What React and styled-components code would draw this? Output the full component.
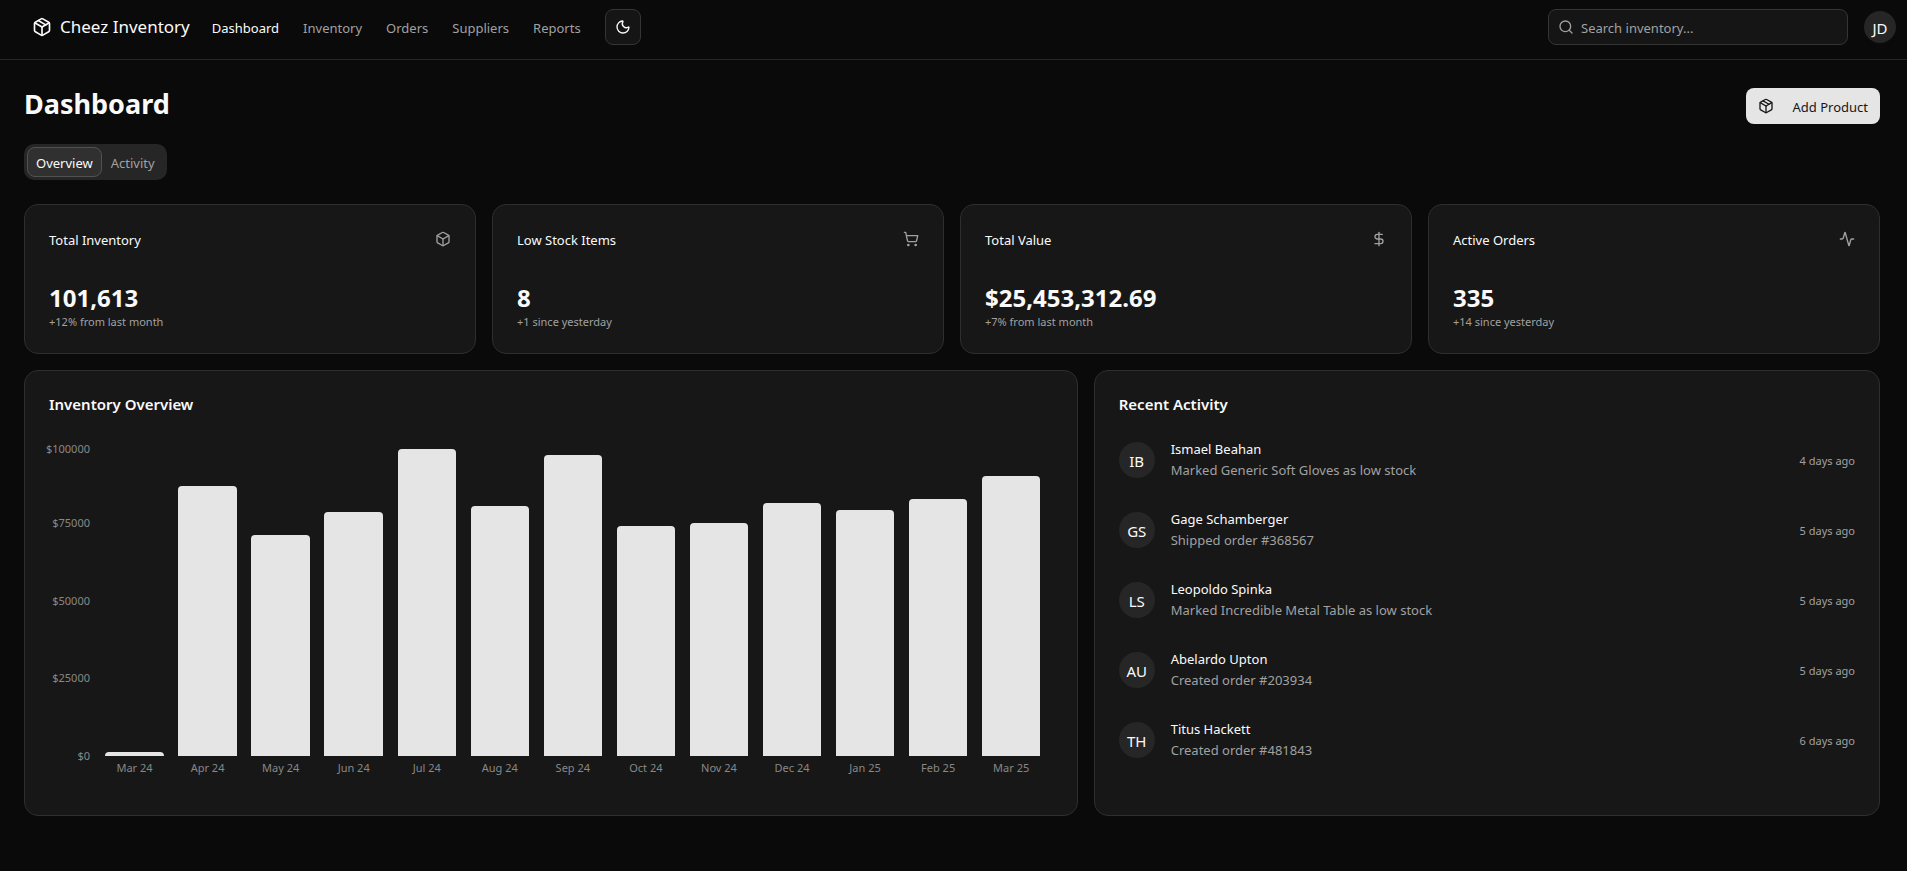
import React from "react";
import styled, { createGlobalStyle } from "styled-components";
import { Activity, Box, DollarSign, Moon, Package, Search, ShoppingCart } from "lucide-react";

const GlobalStyle = createGlobalStyle`
  *, *::before, *::after { box-sizing: border-box; }
  html { background: #0a0a0a; }
  body {
    margin: 0;
    background: #0a0a0a;
    color: #fafafa;
    font-family: "Noto Sans", "Open Sans", sans-serif;
    font-size: 15px;
    line-height: 24px;
  }
  h1, h2, h3, p, ul { margin: 0; padding: 0; }
  ul { list-style: none; }
  button, input { font: inherit; color: inherit; }
  a { color: inherit; text-decoration: none; }
`;

const Header = styled.header`
  display: flex;
  align-items: center;
  gap: 22px;
  height: 60px;
  padding: 0 11px 5px 32px;
  border-bottom: 1px solid #262626;
`;

const Brand = styled.a`
  display: flex;
  align-items: center;
  gap: 8px;
  font-size: 17px;
`;

const Nav = styled.nav`
  display: flex;
  align-items: center;
  gap: 24px;
  font-size: 13px;
`;

const NavLink = styled.a`
  padding-top: 2px;
  color: ${(p) => (p.$active ? "#fafafa" : "#a1a1a1")};
`;

const IconButton = styled.button`
  display: flex;
  align-items: center;
  justify-content: center;
  width: 36px;
  height: 36px;
  padding: 0;
  border: 1px solid #353535;
  border-radius: 8px;
  background: #151515;
`;

const HeaderEnd = styled.div`
  display: flex;
  align-items: center;
  gap: 16px;
  margin-left: auto;
`;

const SearchField = styled.label`
  display: flex;
  align-items: center;
  gap: 7px;
  width: 300px;
  height: 36px;
  padding: 0 9px;
  border: 1px solid #353535;
  border-radius: 8px;
  background: #151515;
  color: #a1a1a1;
`;

const SearchInput = styled.input`
  flex: 1;
  min-width: 0;
  padding: 2px 0 0;
  border: 0;
  outline: 0;
  background: transparent;
  font-size: 13px;
  &::placeholder { color: #a1a1a1; opacity: 1; }
`;

const Avatar = styled.span`
  display: flex;
  flex: none;
  align-items: center;
  justify-content: center;
  width: ${(p) => p.$size}px;
  height: ${(p) => p.$size}px;
  padding-top: 2px;
  border-radius: 50%;
  background: #262626;
  font-size: 15px;
`;

const Main = styled.main`
  padding: 24px 27px 24px 24px;
`;

const TitleRow = styled.div`
  display: flex;
  align-items: flex-start;
  justify-content: space-between;
  height: 40px;
`;

const PageTitle = styled.h1`
  padding-top: 2px;
  font-size: 27px;
  line-height: 36px;
  font-weight: 700;
`;

const PrimaryButton = styled.button`
  display: flex;
  align-items: center;
  align-self: flex-end;
  justify-content: space-between;
  gap: 16px;
  min-width: 134px;
  height: 36px;
  padding: 0 12px;
  border: 0;
  border-radius: 8px;
  background: #e5e5e5;
  color: #171717;
  font-size: 13px;
`;

const ButtonLabel = styled.span`
  padding-top: 2px;
`;

const TabList = styled.div`
  display: inline-flex;
  height: 36px;
  margin: 20px 0 24px;
  padding: 3px;
  border-radius: 10px;
  background: #262626;
  vertical-align: top;
`;

const Tab = styled.button`
  padding: 2px 8px 0;
  border: 1px solid ${(p) => (p.$active ? "#525252" : "transparent")};
  border-radius: 8px;
  background: ${(p) => (p.$active ? "#303030" : "transparent")};
  color: ${(p) => (p.$active ? "#fafafa" : "#a1a1a1")};
  font-size: 13px;
  line-height: 20px;
`;

const Card = styled.section`
  min-width: 0;
  padding: 24px;
  border: 1px solid #2e2e2e;
  border-radius: 14px;
  background: #171717;
`;

const StatGrid = styled.div`
  display: grid;
  grid-template-columns: repeat(4, 1fr);
  gap: 16px;
  margin-bottom: 16px;
`;

const StatHead = styled.div`
  display: flex;
  align-items: center;
  justify-content: space-between;
  margin-bottom: 32px;
  color: #a1a1a1;
`;

const StatTitle = styled.h2`
  padding-top: 2px;
  color: #fafafa;
  font-size: 13px;
  line-height: 18px;
  font-weight: 400;
`;

const StatValue = styled.p`
  padding-top: 2px;
  font-size: 24px;
  line-height: 30px;
  font-weight: 700;
`;

const StatNote = styled.p`
  padding-top: 2px;
  color: #a1a1a1;
  font-size: 11px;
  line-height: 14px;
`;

const PanelGrid = styled.div`
  display: grid;
  grid-template-columns: repeat(7, 1fr);
  gap: 16px;
`;

const Panel = styled(Card)`
  grid-column: span ${(p) => p.$span};
`;

const PanelTitle = styled.h2`
  margin-bottom: 30px;
  padding-top: 2px;
  font-size: 15px;
  line-height: 14px;
  font-weight: 600;
`;

const Chart = styled.div`
  display: grid;
  grid-template: 310px 35px / 49px 1fr;
  margin-left: -8px;
  padding: 5px 5px 0 0;
  color: #888888;
  font-size: 11px;
  line-height: 16px;
`;

const YAxis = styled.div`
  display: flex;
  flex-direction: column;
  height: 323px;
  margin-top: -5px;
  text-align: right;
`;

const Tick = styled.span`
  flex: ${(p) => p.$span} 0 0;
  &:last-child { flex: 0 0 16px; }
`;

const Plot = styled.div`
  display: grid;
  grid-template-columns: repeat(13, 1fr);
  align-items: end;
  justify-items: center;
  margin-left: 8px;
`;

const Bar = styled.div`
  width: 80%;
  height: ${(p) => p.$value / 1000}%;
  border-radius: 4px 4px 0 0;
  background: #e5e5e5;
`;

const XAxis = styled.div`
  display: grid;
  grid-column: 2;
  grid-template-columns: repeat(13, 1fr);
  margin-left: 8px;
  padding-top: 4px;
  text-align: center;
`;

const Feed = styled.ul`
  display: grid;
  gap: 32px;
`;

const FeedItem = styled.li`
  display: flex;
  align-items: center;
  gap: 16px;
  height: 38px;
  font-size: 13px;
`;

const FeedName = styled.p`
  margin-bottom: 4px;
  padding-top: 2px;
  line-height: 12px;
`;

const FeedAction = styled.p`
  padding-top: 2px;
  color: #a1a1a1;
  line-height: 18px;
`;

const FeedTime = styled.time`
  margin-left: auto;
  padding-top: 2px;
  color: #a1a1a1;
  font-size: 11px;
`;

const links = ["Dashboard", "Inventory", "Orders", "Suppliers", "Reports"];

const stats = [
  { title: "Total Inventory", value: "101,613", note: "+12% from last month", Icon: Box },
  { title: "Low Stock Items", value: "8", note: "+1 since yesterday", Icon: ShoppingCart },
  { title: "Total Value", value: "$25,453,312.69", note: "+7% from last month", Icon: DollarSign },
  { title: "Active Orders", value: "335", note: "+14 since yesterday", Icon: Activity },
];

const months = [
  ["Mar 24", 1250],
  ["Apr 24", 87100],
  ["May 24", 71200],
  ["Jun 24", 78700],
  ["Jul 24", 98900],
  ["Aug 24", 80500],
  ["Sep 24", 97100],
  ["Oct 24", 74100],
  ["Nov 24", 75200],
  ["Dec 24", 81600],
  ["Jan 25", 79200],
  ["Feb 25", 82800],
  ["Mar 25", 90400],
];

const ticks = [
  ["$100000", 74],
  ["$75000", 78],
  ["$50000", 77],
  ["$25000", 78],
  ["$0", 0],
];

const feed = [
  ["IB", "Ismael Beahan", "Marked Generic Soft Gloves as low stock", "4 days ago"],
  ["GS", "Gage Schamberger", "Shipped order #368567", "5 days ago"],
  ["LS", "Leopoldo Spinka", "Marked Incredible Metal Table as low stock", "5 days ago"],
  ["AU", "Abelardo Upton", "Created order #203934", "5 days ago"],
  ["TH", "Titus Hackett", "Created order #481843", "6 days ago"],
];

export default function App() {
  return (
    <>
      <GlobalStyle />
      <Header>
        <Brand href="#">
          <Package size={20} />
          Cheez Inventory
        </Brand>
        <Nav>
          {links.map((name, i) => (
            <NavLink key={name} href="#" $active={i === 0}>{name}</NavLink>
          ))}
          <IconButton type="button" aria-label="Toggle theme">
            <Moon size={16} />
          </IconButton>
        </Nav>
        <HeaderEnd>
          <SearchField>
            <Search size={16} />
            <SearchInput type="search" aria-label="Search inventory" placeholder="Search inventory..." />
          </SearchField>
          <Avatar $size={32}>JD</Avatar>
        </HeaderEnd>
      </Header>
      <Main>
        <TitleRow>
          <PageTitle>Dashboard</PageTitle>
          <PrimaryButton type="button">
            <Package size={16} />
            <ButtonLabel>Add Product</ButtonLabel>
          </PrimaryButton>
        </TitleRow>
        <TabList role="tablist">
          <Tab type="button" role="tab" aria-selected="true" $active>Overview</Tab>
          <Tab type="button" role="tab" aria-selected="false">Activity</Tab>
        </TabList>
        <StatGrid>
          {stats.map(({ title, value, note, Icon }) => (
            <Card key={title}>
              <StatHead>
                <StatTitle>{title}</StatTitle>
                <Icon size={16} />
              </StatHead>
              <StatValue>{value}</StatValue>
              <StatNote>{note}</StatNote>
            </Card>
          ))}
        </StatGrid>
        <PanelGrid>
          <Panel $span={4}>
            <PanelTitle>Inventory Overview</PanelTitle>
            <Chart>
              <YAxis>
                {ticks.map(([label, span]) => (
                  <Tick key={label} $span={span}>{label}</Tick>
                ))}
              </YAxis>
              <Plot>
                {months.map(([name, value]) => (
                  <Bar key={name} $value={value} />
                ))}
              </Plot>
              <XAxis>
                {months.map(([name]) => (
                  <span key={name}>{name}</span>
                ))}
              </XAxis>
            </Chart>
          </Panel>
          <Panel $span={3}>
            <PanelTitle>Recent Activity</PanelTitle>
            <Feed>
              {feed.map(([initials, name, action, time]) => (
                <FeedItem key={name}>
                  <Avatar $size={36}>{initials}</Avatar>
                  <div>
                    <FeedName>{name}</FeedName>
                    <FeedAction>{action}</FeedAction>
                  </div>
                  <FeedTime>{time}</FeedTime>
                </FeedItem>
              ))}
            </Feed>
          </Panel>
        </PanelGrid>
      </Main>
    </>
  );
}
